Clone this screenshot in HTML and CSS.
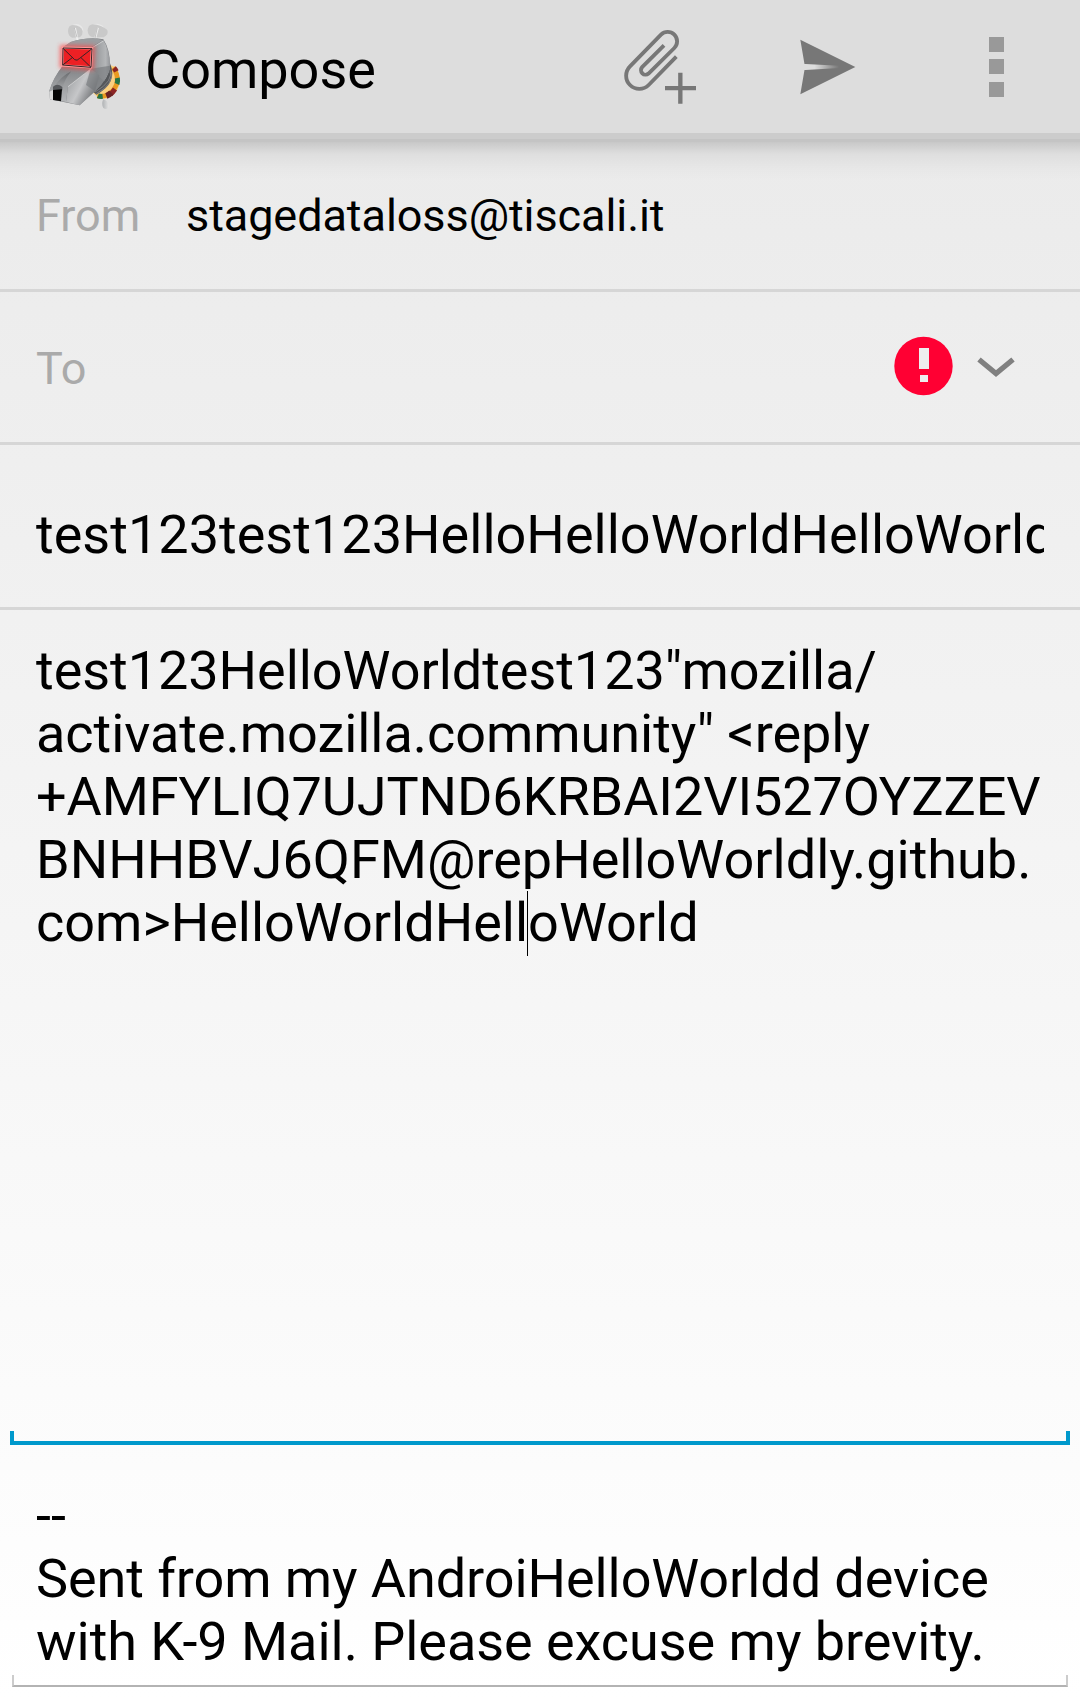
FILE: index.html
```html
<!DOCTYPE html>
<html lang="en">
<head>
<meta charset="utf-8">
<title>Compose</title>
<link rel="stylesheet" href="styles.css">
</head>
<body>
<header class="bar">
  <svg class="logo" viewBox="0 0 360 330">
    <defs>
      <linearGradient id="head" gradientUnits="userSpaceOnUse" x1="120" y1="170" x2="225" y2="240"><stop offset="0" stop-color="#8b8d90"/><stop offset=".35" stop-color="#77797c"/><stop offset=".6" stop-color="#85878a"/><stop offset="1" stop-color="#aaacaf"/></linearGradient>
      <linearGradient id="side" gradientUnits="userSpaceOnUse" x1="188" y1="0" x2="240" y2="0"><stop offset="0" stop-color="#8f9194"/><stop offset=".75" stop-color="#b4b6b8"/><stop offset="1" stop-color="#94969a"/></linearGradient>
      <linearGradient id="jaw" gradientUnits="userSpaceOnUse" x1="115" y1="225" x2="185" y2="262"><stop offset="0" stop-color="#a9abad"/><stop offset=".45" stop-color="#c6c7c9"/><stop offset="1" stop-color="#77797c"/></linearGradient>
      <linearGradient id="nose" x1="0" y1="0" x2="0" y2="1"><stop offset="0" stop-color="#808285"/><stop offset="1" stop-color="#b5b7b9"/></linearGradient>
      <linearGradient id="snout" x1="0" y1="0" x2="0" y2="1"><stop offset="0" stop-color="#686a6d"/><stop offset="1" stop-color="#a4a6a8"/></linearGradient>
      <linearGradient id="tag"><stop offset="0" stop-color="#aeb1b3"/><stop offset="1" stop-color="#e2e2e2"/></linearGradient>
      <filter id="glow" x="-30%" y="-30%" width="160%" height="160%"><feGaussianBlur stdDeviation="6"/></filter>
    </defs>
    <g fill="#e8e8e8"><ellipse cx="139" cy="62" rx="21" ry="20"/><ellipse cx="199" cy="60" rx="25" ry="19"/></g>
    <path d="M114 62Q115 46 128 45Q154 46 158 63Q159 77 148 82L127 83Q114 78 114 62Z" fill="#c9c9c9"/>
    <path d="M173 61Q174 45 187 43Q215 45 232 60Q237 74 221 82L189 82Q173 79 173 61Z" fill="#c9c9c9"/>
    <path d="M135 54L143 92M204 53L193 94" stroke="#eee" stroke-width="6"/>
    <path d="M133 54L141 82M202 53L195 84" stroke="#aaa" stroke-width="2"/>
    <path d="M220 268Q238 275 236 291Q231 301 220 294Q213 280 220 268Z" fill="url(#tag)"/>
    <path d="M240 165L255 170Q279 203 263 238Q243 270 208 267L190 250Z" fill="#fbd080"/>
    <path d="M250 173Q276 212 246 245Q229 262 202 258" fill="none" stroke="#e99a20" stroke-width="14"/>
    <path d="M252 174Q256 178 259 184M255 237Q249 246 241 253" stroke="#8c2525" stroke-width="15" fill="none"/>
    <path d="M262 204Q264 214 261 222M218 259Q210 260 204 257" stroke="#267346" stroke-width="15" fill="none"/>
    <path d="M244 248Q237 255 229 258" stroke="#6b2224" stroke-width="18" fill="none"/>
    <path d="M240 160Q265 219 199 254L185 241Z" fill="#55575a"/>
    <path d="M239 176Q254 213 195 246M243 185Q253 222 199 251" fill="none" stroke="#929396" stroke-width="2"/>
    <path d="M122 96Q175 79 220 88Q240 118 240 166Q237 205 195 244L149 286L60 268L58 242Q69 204 98 168L99 112Z" fill="url(#head)"/>
    <path d="M188 112L220 90Q238 118 240 166Q239 190 222 213L182 176Z" fill="url(#side)"/>
    <path d="M114 229L182 176L208 196L195 244L149 286L108 276Z" fill="url(#jaw)"/>
    <path d="M182 176L240 167Q237 205 195 244L168 225Z" fill="#77797c" opacity=".65"/>
    <path d="M98 168L183 176L114 229L108 276L60 268L58 242Q70 205 98 168Z" fill="url(#nose)"/>
    <path d="M124 184Q91 199 67 238L98 234Q103 208 124 184Z" fill="url(#snout)"/>
    <path d="M122 96Q175 79 220 90L184 111L100 112Z" fill="#9b9da0"/>
    <path d="M188 112L220 93M183 176L114 230" stroke="#dedede" stroke-width="2"/>
    <path d="M58 245L69 240L69 270L60 267Z" fill="#dadada"/>
    <path d="M69 230Q82 218 97 231V241H69Z" fill="#56585b"/>
    <path d="M69 240L96 238L93 274L69 270Z" fill="#050505"/>
    <path d="M97 112L187 114L184 174L96 167Z" fill="#ff4545" stroke="#ff4a4a" stroke-width="14" opacity=".75" filter="url(#glow)"/>
    <path d="M98 113L186 115L183 172L97 166Z" fill="#ed2024" stroke="#ff9c9c" stroke-width="7"/>
    <path d="M99 114L186 116L183 172L98 165ZM99 115L134 149Q141 154 149 145L186 116M98 165L128 142M183 172L153 143" fill="none" stroke="#382326" stroke-width="3"/>
  </svg>
  <h1 class="title">Compose</h1>
  <svg class="clip" viewBox="60 48 240 240" fill="none" stroke="#777">
    <path d="M192 106L126.400 171.400A13.600 13.600 0 0 0 145.600 190.600L223 114A28 28 0 0 0 183 74L90 169A39.500 39.500 0 0 0 146 225L229 140" stroke-width="11.500"/>
    <path d="M241 188V281M195 234.500H288" stroke-width="13"/>
  </svg>
  <svg class="send" viewBox="600 87 168 168">
    <defs><linearGradient id="slit"><stop offset=".3" stop-color="#ddd"/><stop offset="1" stop-color="#777"/></linearGradient></defs>
    <path d="M601 89L766 171L601 253L615 171Z" fill="#777"/>
    <path d="M612 162H617L717 167V174L617 180H612Z" fill="url(#slit)"/>
  </svg>
  <div class="more"><i></i><i></i><i></i></div>
</header>
<main class="form">
  <section class="row from"><span class="label">From</span><span class="address">stagedataloss@tiscali.it</span></section>
  <section class="row to">
    <span class="label">To</span>
    <svg class="alert" viewBox="0 0 60 60"><circle cx="30.500" cy="30" r="29.200" fill="#ff0033"/><path d="M26 12H36V33H26ZM27 39H35V46H27Z" fill="#eee"/></svg>
    <svg class="chevron" viewBox="0 0 38 22"><path d="M2 3.500L19 17.500L36 3.500" fill="none" stroke="#808080" stroke-width="5.300"/></svg>
  </section>
  <section class="row subject"><div class="subject-text">test123test123HelloHelloWorldHelloWorld</div></section>
  <section class="message"><span class="snug">test123HelloWorldtest123"mozilla/<br>activate.mozilla.community" &lt;reply</span><br><span class="tight">+AMFYLIQ7UJTND6KRBAI2VI527OYZZEV</span><br>BNHHBVJ6QFM@repHelloWorldly.github.<br>com&gt;HelloWorldHell<span class="caret"></span>oWorld</section>
  <div class="underline active"></div>
  <section class="signature">--<br><span class="tight">Sent from my AndroiHelloWorldd device</span><br><span class="snug">with K-9 Mail. Please excuse my brevity.</span></section>
  <div class="underline idle"></div>
</main>
</body>
</html>
```
FILE: styles.css
```css
* { box-sizing: border-box; }
body {
  margin: 0;
  height: 1699px;
  overflow: hidden;
  background: linear-gradient(#e9e9e9, #fff);
  color: #000;
  font: 54px/63px Roboto, sans-serif;
}
.bar {
  height: 142px;
  display: flex;
  align-items: flex-start;
  background: linear-gradient(#ddd 133px, #ccc 133px, #ccc 139px, #c4c4c4 139px);
}
.logo { width: 120px; height: 110px; margin: 10px 0 0 30px; }
.title { margin: 38px 0 0 -5px; width: 475px; font-size: 54px; font-weight: 400; }
.clip { width: 80px; height: 80px; margin-top: 26px; }
.send { width: 56px; height: 56px; margin: 39px 0 0 100px; }
.more { width: 15px; margin: 37px 0 0 133px; }
.more i { display: block; width: 15px; height: 15px; margin-bottom: 7px; background: #999; }
.more i:nth-child(2) { margin-bottom: 8px; }

.row { display: flex; border-bottom: 3px solid #d6d6d6; padding: 0 36px; }
.from {
  height: 150px;
  padding-top: 47px;
  font-size: 45px;
  line-height: 53px;
  background: linear-gradient(rgba(0,0,0,.15), rgba(0,0,0,.055) 12px, rgba(0,0,0,.015) 27px, transparent 38px);
}
.label { width: 150px; color: #aaa; }
.address { letter-spacing: -.08px; }
.to { height: 153px; padding-top: 50px; font-size: 45px; line-height: 53px; }
.alert { width: 60px; height: 60px; margin: -6px 0 0 707px; }
.chevron { width: 38px; height: 22px; margin: 14px 0 0 24px; }
.subject { height: 165px; padding-top: 58px; }
.subject-text { width: 1008px; overflow: hidden; white-space: nowrap; letter-spacing: .02px; }
.message { height: 821px; padding: 29px 0 0 36px; white-space: nowrap; }
.snug { letter-spacing: -.04px; }
.tight { letter-spacing: -.085px; }
.caret { position: relative; }
.caret::after {
  content: "";
  position: absolute;
  left: -1px;
  top: 0;
  width: 1px;
  height: 65px;
  background: #000;
}
.underline { border-style: solid; border-top: 0; }
.active { height: 14px; margin: 0 10px; border-color: #0099cc; border-width: 0 4px 4px; }
.signature { height: 230px; padding: 39px 0 0 36px; white-space: nowrap; }
.idle { height: 12px; margin: 0 12px; border-color: #b3b3b3 #ccc; border-width: 0 2px 2px; }
```
